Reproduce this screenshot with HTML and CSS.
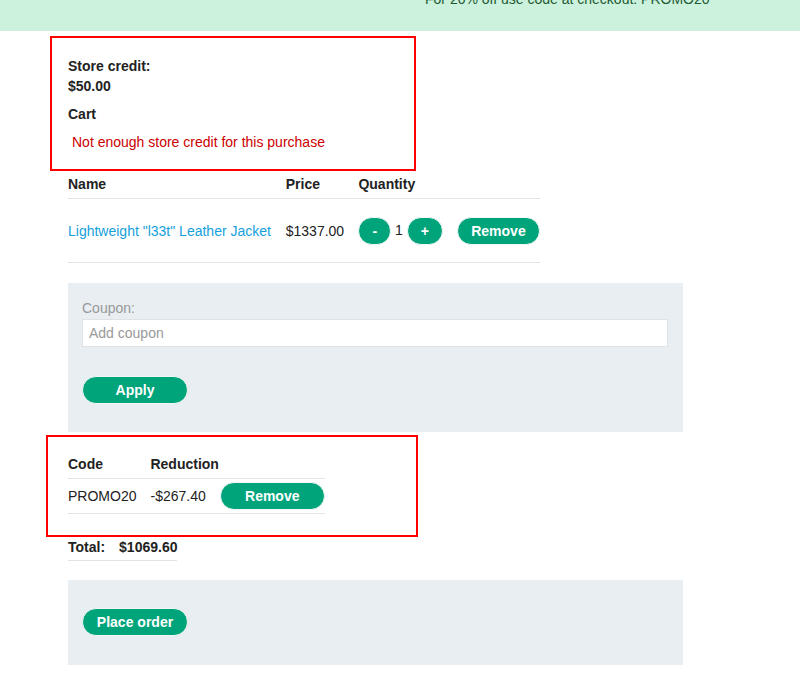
FILE: index.html
```html
<!DOCTYPE html>
<html>
<head>
<meta charset="utf-8">
<link rel="stylesheet" href="styles.css">
</head>
<body>
<div class="banner"><p class="banner-text">For 20% off use code at checkout: PROMO20</p></div>
<main class="page">
  <section class="box box-credit">
    <div class="strong">Store credit:</div>
    <div class="strong">$50.00</div>
    <div class="strong cart-title">Cart</div>
    <div class="error">Not enough store credit for this purchase</div>
  </section>
  <table class="grid cart">
    <thead>
      <tr><th>Name</th><th>Price</th><th>Quantity</th><th></th></tr>
    </thead>
    <tbody>
      <tr>
        <td><a class="link" href="#">Lightweight "l33t" Leather Jacket</a></td>
        <td>$1337.00</td>
        <td class="qty"><button class="btn btn-sm">-</button> 1 <button class="btn btn-sm">+</button></td>
        <td><button class="btn btn-sm">Remove</button></td>
      </tr>
    </tbody>
  </table>
  <form class="panel coupon-panel">
    <label class="coupon-label" for="coupon">Coupon:</label>
    <input id="coupon" class="coupon-input" type="text" placeholder="Add coupon">
    <button type="button" class="btn btn-wide">Apply</button>
  </form>
  <section class="box box-codes">
    <table class="grid codes">
      <thead>
        <tr><th>Code</th><th colspan="2">Reduction</th></tr>
      </thead>
      <tbody>
        <tr><td>PROMO20</td><td>-$267.40</td><td><button class="btn btn-mid">Remove</button></td></tr>
      </tbody>
    </table>
  </section>
  <table class="grid total">
    <tbody>
      <tr><th>Total:</th><th>$1069.60</th></tr>
    </tbody>
  </table>
  <div class="panel order-panel">
    <button class="btn btn-order">Place order</button>
  </div>
</main>
</body>
</html>
```
FILE: styles.css
```css
* { box-sizing: border-box; }
html, body { margin: 0; padding: 0; background: #fff; }
body {
  font-family: "Liberation Sans", Arial, sans-serif;
  font-size: 14px;
  line-height: 20px;
  color: #222;
  width: 800px;
  height: 697px;
  overflow: hidden;
}
.banner {
  height: 31px;
  background: #ccf1dc;
  overflow: hidden;
  padding-left: 425px;
}
.banner-text {
  margin: -11px 0 0;
  color: #1d5a33;
  font-size: 14px;
  line-height: 20px;
}
.page {
  padding-left: 68px;
}
.box {
  border: 2px solid #ff0000;
}
.box-credit {
  margin: 5px 0 0 -18px;
  width: 366px;
  padding: 18px 16px 17px 16px;
}
.strong { font-weight: bold; }
.cart-title { margin-top: 8px; }
.error {
  margin-top: 8px;
  padding-left: 4px;
  color: #cc0000;
}
.grid {
  border-collapse: collapse;
  border-spacing: 0;
}
.grid th, .grid td {
  text-align: left;
  padding: 0 14px 0 0;
  white-space: nowrap;
  vertical-align: middle;
}
.grid th:last-child, .grid td:last-child { padding-right: 0; }
.cart { width: 472px; }
.cart thead th {
  padding-top: 3px;
  padding-bottom: 4px;
  border-bottom: 1px solid #e3e3e3;
  font-weight: bold;
}
.cart tbody td {
  padding-top: 18px;
  padding-bottom: 17px;
  border-bottom: 1px solid #e3e3e3;
}
.link {
  color: #159fdb;
  text-decoration: none;
}
.btn {
  font-family: "Liberation Sans", Arial, sans-serif;
  font-size: 14px;
  font-weight: bold;
  color: #fff;
  background: #00a47b;
  border: 1px solid #f3f7f5;
  border-radius: 14px;
  height: 28px;
  line-height: 26px;
  padding: 0 13px;
  margin: 0;
  cursor: pointer;
  vertical-align: middle;
}
.btn-wide, .btn-order { width: 106px; padding: 0; }
.btn-mid { width: 105px; padding: 0; }
.panel {
  background: #e8eef1;
  width: 615px;
  margin: 0;
  padding: 15px 14px 28px 14px;
}
.coupon-panel {
  margin-top: 20px;
  display: flex;
  flex-direction: column;
  align-items: flex-start;
}
.coupon-label {
  color: #999;
  line-height: 21px;
}
.coupon-input {
  width: 586px;
  height: 28px;
  border: 1px solid #dfe3e5;
  background: #fff;
  font-family: "Liberation Sans", Arial, sans-serif;
  font-size: 14px;
  padding: 0 6px;
  color: #333;
  margin: 0 0 29px 0;
  outline: none;
}
.coupon-input::placeholder { color: #999; }
.box-codes {
  margin: 3px 0 0 -22px;
  width: 372px;
  padding: 17px 20px 21px 20px;
}
.codes thead th {
  padding-bottom: 4px;
  border-bottom: 1px solid #e3e3e3;
}
.codes tbody td {
  padding-top: 3px;
  padding-bottom: 3px;
  border-bottom: 1px solid #e3e3e3;
}
.total th {
  padding-bottom: 3px;
  border-bottom: 1px solid #e3e3e3;
}
.order-panel {
  margin-top: 19px;
  padding: 28px 14px 29px 14px;
}
```
